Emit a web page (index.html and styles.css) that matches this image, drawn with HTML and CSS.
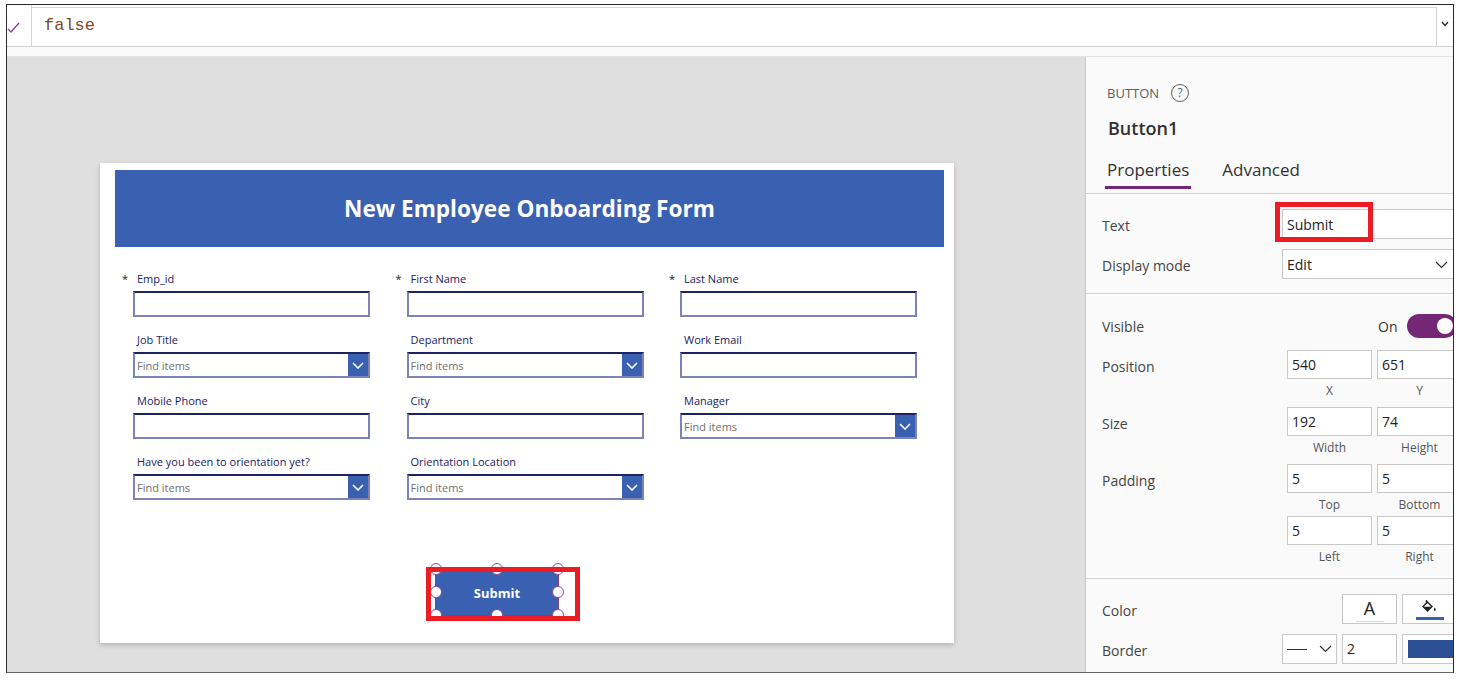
FILE: index.html
```html
<!DOCTYPE html>
<html>
<head>
<meta charset="utf-8">
<title>Onboarding Form - Editor</title>
<link rel="stylesheet" href="styles.css">
</head>
<body>
<div class="frame">
  <div class="formula">
    <div class="fx-check">
      <svg width="13" height="11" viewBox="0 0 13 11"><polyline points="1,7 4,10 12,1" fill="none" stroke="#8a3d93" stroke-width="1.3"/></svg>
    </div>
    <div class="fx-input">false</div>
    <div class="fx-expand">
      <svg width="8" height="6" viewBox="0 0 8 6"><polyline points="1,1 4,4.5 7,1" fill="none" stroke="#222" stroke-width="1.2"/></svg>
    </div>
  </div>
  <div class="formula-gap"></div>
  <div class="main">
    <div class="canvas">
      <div class="card">
        <div class="header">New Employee Onboarding Form</div>
        <div class="fields">
          <div class="field"><div class="lbl req">Emp_id</div><div class="input"></div></div>
          <div class="field"><div class="lbl req">First Name</div><div class="input"></div></div>
          <div class="field"><div class="lbl req">Last Name</div><div class="input"></div></div>

          <div class="field"><div class="lbl">Job Title</div><div class="input dd"><span class="ph">Find items</span><span class="dd-btn"><svg width="12" height="7" viewBox="0 0 12 7"><polyline points="1,1 6,6 11,1" fill="none" stroke="#fff" stroke-width="1.6"/></svg></span></div></div>
          <div class="field"><div class="lbl">Department</div><div class="input dd"><span class="ph">Find items</span><span class="dd-btn"><svg width="12" height="7" viewBox="0 0 12 7"><polyline points="1,1 6,6 11,1" fill="none" stroke="#fff" stroke-width="1.6"/></svg></span></div></div>
          <div class="field"><div class="lbl">Work Email</div><div class="input"></div></div>

          <div class="field"><div class="lbl">Mobile Phone</div><div class="input"></div></div>
          <div class="field"><div class="lbl">City</div><div class="input"></div></div>
          <div class="field"><div class="lbl">Manager</div><div class="input dd"><span class="ph">Find items</span><span class="dd-btn"><svg width="12" height="7" viewBox="0 0 12 7"><polyline points="1,1 6,6 11,1" fill="none" stroke="#fff" stroke-width="1.6"/></svg></span></div></div>

          <div class="field"><div class="lbl">Have you been to orientation yet?</div><div class="input dd"><span class="ph">Find items</span><span class="dd-btn"><svg width="12" height="7" viewBox="0 0 12 7"><polyline points="1,1 6,6 11,1" fill="none" stroke="#fff" stroke-width="1.6"/></svg></span></div></div>
          <div class="field"><div class="lbl">Orientation Location</div><div class="input dd"><span class="ph">Find items</span><span class="dd-btn"><svg width="12" height="7" viewBox="0 0 12 7"><polyline points="1,1 6,6 11,1" fill="none" stroke="#fff" stroke-width="1.6"/></svg></span></div></div>
        </div>
        <div class="submit-wrap">
          <div class="submit">Submit</div>
          <span class="handle h1"></span>
          <span class="handle h2"></span>
          <span class="handle h3"></span>
          <span class="handle h4"></span>
          <span class="handle h5"></span>
          <span class="handle h6"></span>
          <span class="handle h7"></span>
          <span class="handle h8"></span>
          <div class="red-box submit-red"></div>
        </div>
      </div>
    </div>

    <div class="panel">
      <div class="panel-head">
        <div class="ctype">BUTTON <span class="help">?</span></div>
        <div class="cname">Button1</div>
      </div>
      <div class="tabs">
        <div class="tab active">Properties</div>
        <div class="tab">Advanced</div>
      </div>

      <div class="section s1">
        <div class="prop">
          <div class="plabel">Text</div>
          <div class="txtwrap">
            <div class="pinput wide">Submit</div>
            <div class="red-box text-red"></div>
          </div>
        </div>
        <div class="prop gap10">
          <div class="plabel">Display mode</div>
          <div class="pinput wide pdd"><span>Edit</span><svg width="13" height="8" viewBox="0 0 13 8"><polyline points="1,1 6.5,6.5 12,1" fill="none" stroke="#333" stroke-width="1.2"/></svg></div>
        </div>
      </div>

      <div class="section s2">
        <div class="prop vis">
          <div class="plabel vlabel">Visible</div>
          <span class="on">On</span>
          <span class="toggle"><span class="knob"></span></span>
        </div>
        <div class="prop num first">
          <div class="plabel nlabel">Position</div>
          <div class="ngrid">
            <div class="nbox">540</div><div class="nbox">651</div>
            <div class="ncap">X</div><div class="ncap">Y</div>
          </div>
        </div>
        <div class="prop num">
          <div class="plabel nlabel">Size</div>
          <div class="ngrid">
            <div class="nbox">192</div><div class="nbox">74</div>
            <div class="ncap">Width</div><div class="ncap">Height</div>
          </div>
        </div>
        <div class="prop num">
          <div class="plabel nlabel">Padding</div>
          <div class="ngrid">
            <div class="nbox">5</div><div class="nbox">5</div>
            <div class="ncap">Top</div><div class="ncap">Bottom</div>
            <div class="nbox">5</div><div class="nbox">5</div>
            <div class="ncap">Left</div><div class="ncap">Right</div>
          </div>
        </div>
      </div>

      <div class="section s3">
        <div class="prop">
          <div class="plabel">Color</div>
          <div class="cgrid">
            <div class="cslot empty"></div>
            <div class="cslot cbox"><span class="glyphA">A</span><span class="abar"></span></div>
            <div class="cslot cbox">
              <svg width="18" height="15" viewBox="0 0 18 15"><path d="M5.5 1 L5.5 4.5" stroke="#222" stroke-width="1.3"/><path d="M2 7.5 L6.5 3 L11 7.5 L6.5 12 Z" fill="none" stroke="#222" stroke-width="1.4"/><path d="M2.6 7.8 L10.4 7.8 L6.5 11.6 Z" fill="#222"/><path d="M13.8 8.5 C12.6 10.3 12.5 11.4 13.8 12.2 C15.1 11.4 15 10.3 13.8 8.5 Z" fill="#222"/></svg>
              <span class="bbar"></span>
            </div>
          </div>
        </div>
        <div class="prop gap10">
          <div class="plabel">Border</div>
          <div class="cgrid">
            <div class="cslot bstyle"><span class="bline"></span><svg width="13" height="8" viewBox="0 0 13 8"><polyline points="1,1 6.5,6.5 12,1" fill="none" stroke="#333" stroke-width="1.2"/></svg></div>
            <div class="cslot bnum">2</div>
            <div class="cslot bswatch"><span class="sw"></span></div>
          </div>
        </div>
      </div>
    </div>
  </div>
</div>
</body>
</html>
```

FILE: styles.css
```css
* { box-sizing: border-box; }
html, body { margin: 0; padding: 0; background: #ffffff; }
body { font-family: "Open Sans", "Noto Sans", Arial, sans-serif; color: #333; }

.frame {
  margin: 4px 0 0 6px;
  width: 1448px;
  height: 669px;
  border: 1px solid #2a2a2a;
  border-bottom-color: #666;
  display: flex;
  flex-direction: column;
  overflow: hidden;
  background: #fff;
}

/* formula bar */
.formula {
  height: 42px;
  display: flex;
  border-bottom: 1px solid #d4d4d4;
  background: #fff;
  flex: none;
}
.fx-check {
  width: 25px;
  border-right: 1px solid #d4d4d4;
  display: flex;
  align-items: center;
  padding-top: 4px;
}
.fx-input {
  flex: 1;
  margin-top: 2px;
  border: 1px solid #d6d6d6;
  border-left: none;
  border-bottom: none;
  padding-left: 12px;
  font-family: "Liberation Mono", monospace;
  font-size: 17px;
  line-height: 36px;
  color: #7a4b26;
}
.fx-expand {
  width: 16px;
  display: flex;
  justify-content: center;
  padding-top: 16px;
}
.formula-gap { height: 10px; background: #fafafa; flex: none; border-bottom: 1px solid #e2e2e2; }

.main { flex: 1; display: flex; min-height: 0; }

/* canvas */
.canvas {
  width: 1078px;
  background: #dfdfdf;
  padding: 106px 0 0 93px;
}
.card {
  width: 854px;
  height: 480px;
  background: #fff;
  box-shadow: 0 2px 5px rgba(0,0,0,0.2);
  padding-top: 7px;
}
.header {
  margin: 0 10px 0 15px;
  height: 77px;
  background: #3960b1;
  color: #fff;
  font-weight: 700;
  font-size: 22.6px;
  display: flex;
  align-items: center;
  justify-content: center;
}
.fields {
  margin: 24px 0 0 33px;
  display: grid;
  grid-template-columns: repeat(3, 237px);
  column-gap: 36.5px;
  row-gap: 15px;
}
.lbl {
  font-size: 11px;
  line-height: 16px;
  height: 16px;
  margin-bottom: 4px;
  padding-left: 4px;
  color: #1b2163;
  white-space: nowrap;
}
.lbl.req::before {
  content: "*";
  display: inline-block;
  width: 15px;
  margin-left: -15px;
  color: #222;
}
.input {
  height: 26px;
  border: 2px solid;
  border-color: #1c2262 #7c83b6 #7c83b6 #7c83b6;
  background: #fff;
}
.input.dd {
  display: flex;
  align-items: center;
}
.ph {
  flex: 1;
  font-size: 11px;
  color: #6f6f6f;
  padding-left: 2px;
}
.dd-btn {
  width: 20px;
  height: 22px;
  background: #3960b1;
  display: flex;
  align-items: center;
  justify-content: center;
}

.submit-wrap {
  position: relative;
  margin: 69px 0 0 336px;
  width: 122px;
  height: 46px;
}
.submit {
  width: 122px;
  height: 46px;
  background: #3960b1;
  color: #fff;
  font-weight: 700;
  font-size: 13px;
  display: flex;
  align-items: center;
  justify-content: center;
  padding-top: 2px;
  outline: 1px solid #7b3f8c;
}
.handle {
  position: absolute;
  width: 12px;
  height: 12px;
  border-radius: 50%;
  background: #fff;
  border: 1.3px solid #8a4d9a;
  transform: translate(-50%, -50%);
}
.h1 { left: 0; top: 0; }
.h2 { left: 61px; top: 0; }
.h3 { left: 122px; top: 0; }
.h4 { left: 0; top: 23px; }
.h5 { left: 122px; top: 23px; }
.h6 { left: 0; top: 46px; }
.h7 { left: 61px; top: 46px; }
.h8 { left: 122px; top: 46px; }

.red-box {
  position: absolute;
  border: 5px solid #ec1c24;
}
.submit-red { left: -10px; top: -2px; width: 154px; height: 54px; }

/* panel */
.panel {
  width: 368px;
  border-left: 1px solid #c8c8c8;
  background: #fafafa;
  overflow: hidden;
}
.panel-head { padding: 26px 0 0 21px; }
.ctype {
  font-size: 13px;
  line-height: 20px;
  color: #605e5c;
  display: flex;
  align-items: center;
}
.help {
  margin-left: 12px;
  width: 18px;
  height: 18px;
  border: 1.2px solid #605e5c;
  border-radius: 50%;
  font-size: 12px;
  line-height: 16px;
  text-align: center;
  color: #605e5c;
}
.cname {
  margin-top: 13px;
  font-size: 18px;
  font-weight: 600;
  line-height: 24px;
  color: #323130;
  padding-left: 1px;
}
.tabs {
  margin-top: 18px;
  padding: 0 0 4px 19px;
  display: flex;
  gap: 29px;
  border-bottom: 1px solid #d2d2d2;
}
.tab {
  font-size: 17px;
  line-height: 24px;
  padding: 0 2px 4px;
  border-bottom: 3px solid transparent;
  color: #323130;
}
.tab.active { border-bottom-color: #742774; }

.section {
  padding-left: 16px;
  border-bottom: 1px solid #d2d2d2;
  width: 420px;
}
.s1 { padding-top: 15px; padding-bottom: 14px; }
.s2 { padding-top: 20px; padding-bottom: 10px; }
.s3 { padding-top: 15px; border-bottom: none; }

.prop { display: flex; align-items: center; height: 30px; }
.prop.gap10 { margin-top: 10px; }
.plabel {
  width: 180px;
  font-size: 14px;
  color: #444;
  flex: none;
  padding-top: 2px;
}
.txtwrap { position: relative; }
.pinput {
  height: 30px;
  border: 1px solid #c8c8c8;
  background: #fff;
  font-size: 14px;
  line-height: 29px;
  padding-left: 4px;
  color: #222;
}
.pinput.wide { width: 200px; }
.pdd {
  display: flex;
  align-items: center;
  justify-content: space-between;
  width: 176px !important;
  padding-right: 9px;
  padding-top: 1px;
}
.text-red { left: -7px; top: -7px; width: 98px; height: 40px; }

.prop.vis { height: 24px; }
.vlabel { width: 276px; padding-top: 0; }
.on { font-size: 14px; color: #333; width: 29px; }
.toggle {
  width: 50px;
  height: 24px;
  border-radius: 12px;
  background: #742774;
  display: flex;
  align-items: center;
  justify-content: flex-end;
  padding-right: 4px;
  flex: none;
}
.knob { width: 16px; height: 16px; border-radius: 50%; background: #fff; }

.prop.num { height: auto; align-items: flex-start; margin-top: 5px; }
.prop.num.first { margin-top: 12px; }
.nlabel { width: 185px; line-height: 29px; padding-top: 2px; }
.ngrid {
  display: grid;
  grid-template-columns: 85px 85px;
  column-gap: 5px;
}
.nbox {
  height: 29px;
  border: 1px solid #c8c8c8;
  background: #fff;
  font-size: 14px;
  line-height: 27px;
  padding-left: 4px;
  color: #222;
}
.ncap {
  height: 23px;
  line-height: 23px;
  text-align: center;
  font-size: 12px;
  color: #555;
}

.cgrid {
  display: grid;
  grid-template-columns: 55px 55px 55px;
  column-gap: 5px;
}
.cslot {
  height: 30px;
  border: 1px solid #c8c8c8;
  background: #fff;
}
.cslot.empty { border: none; background: transparent; }
.cbox {
  display: flex;
  flex-direction: column;
  align-items: center;
  justify-content: center;
  gap: 1px;
}
.glyphA { font-size: 18px; line-height: 20px; color: #222; }
.abar { width: 28px; height: 2px; background: #fff; box-shadow: 0 1px 1px #d8d8d8; }
.bbar { width: 28px; height: 3px; background: #3d5fb0; margin-top: 2px; }
.bstyle {
  display: flex;
  align-items: center;
  justify-content: space-between;
  padding: 0 4px 0 4px;
}
.bline { width: 20px; height: 1px; background: #333; }
.bnum { font-size: 14px; line-height: 28px; padding-left: 4px; color: #222; }
.bswatch { padding: 5px 0 0 5px; }
.sw { display: block; width: 45px; height: 18px; background: #2c4f96; }
```
